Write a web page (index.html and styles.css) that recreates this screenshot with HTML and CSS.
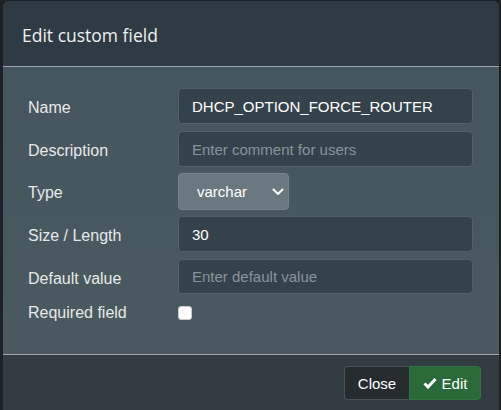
FILE: index.html
```html
<!DOCTYPE html>
<html>
<head>
<meta charset="utf-8">
<link rel="stylesheet" href="styles.css">
</head>
<body>
<div class="modal">
  <div class="modal-header">
    <h1 class="modal-title">Edit custom field</h1>
  </div>
  <div class="modal-body">
    <div class="form">
      <label class="label">Name</label>
      <div class="input">DHCP_OPTION_FORCE_ROUTER</div>
      <label class="label">Description</label>
      <div class="input placeholder">Enter comment for users</div>
      <label class="label">Type</label>
      <div class="select-wrap">
        <div class="select"><span>varchar</span>
          <svg class="chev" width="12" height="8" viewBox="0 0 12 8"><path d="M1.5 1.5 L6 6 L10.5 1.5" fill="none" stroke="#fff" stroke-width="2" stroke-linecap="round" stroke-linejoin="round"/></svg>
        </div>
      </div>
      <label class="label">Size / Length</label>
      <div class="input">30</div>
      <label class="label">Default value</label>
      <div class="input placeholder short">Enter default value</div>
      <label class="label label-check">Required field</label>
      <div class="check-wrap"><span class="checkbox"></span></div>
    </div>
  </div>
  <div class="modal-footer">
    <div class="btn-group">
      <button class="btn btn-close">Close</button>
      <button class="btn btn-edit"><svg width="14" height="12" viewBox="0 0 14 12"><path d="M1.5 6.5 L5 10 L12.5 2" fill="none" stroke="#fff" stroke-width="3" stroke-linejoin="miter"/></svg>Edit</button>
    </div>
  </div>
</div>
</body>
</html>
```
FILE: styles.css
```css
html, body {
  margin: 0;
  padding: 0;
  background: #1d2226;
  width: 501px;
  height: 410px;
  overflow: hidden;
}
.modal {
  margin: 1px 2px 0 3px;
  height: 420px;
  border-radius: 6px 6px 0 0;
  overflow: hidden;
  font-family: "Liberation Sans", Arial, sans-serif;
  background: #343c43;
  display: flex;
  flex-direction: column;
}
.modal-header {
  height: 65px;
  background: #2e3b44;
  border-bottom: 1px solid #a3a6a8;
  display: flex;
  align-items: center;
  padding-left: 19px;
}
.modal-title {
  margin: 0;
  font-family: "Open Sans", "Noto Sans", sans-serif;
  font-weight: 400;
  font-size: 17.5px;
  color: #eef0f1;
  position: relative;
  top: 1px;
}
.modal-body {
  height: 288px;
  box-sizing: border-box;
  padding: 21px 26px 0 25px;
  background: linear-gradient(180deg, #46565f 0%, #48585f 60%, #4a5a60 100%);
  border-bottom: 1px solid #a3a6a8;
}
.form {
  display: grid;
  grid-template-columns: 150px 1fr;
  grid-template-rows: 37px 36px 37px 37px 35px 20px;
  row-gap: 6px;
}
.label {
  color: #e6e9ea;
  font-size: 16px;
  display: flex;
  align-items: center;
  height: 36px;
  box-sizing: border-box;
  padding-top: 3px;
}
.label.label-check {
  height: 20px;
  padding-top: 6px;
}
.input {
  height: 36px;
  background: #34434b;
  border: 1px solid #526168;
  border-radius: 4px;
  box-sizing: border-box;
  display: flex;
  align-items: center;
  padding-left: 13px;
  color: #ffffff;
  font-size: 15px;
}
.input.short {
  height: 35px;
}
.input.placeholder {
  color: #899499;
}
.select-wrap {
  display: flex;
}
.select {
  width: 111px;
  height: 37px;
  box-sizing: border-box;
  background: #69797f;
  border: 1px solid #75848a;
  border-radius: 4px;
  display: flex;
  align-items: center;
  justify-content: space-between;
  padding: 0 4px 0 18px;
  color: #ffffff;
  font-size: 15px;
}
.chev {
  display: block;
}
.check-wrap {
  display: flex;
  align-items: center;
  height: 20px;
}
.checkbox {
  width: 14px;
  height: 14px;
  box-sizing: border-box;
  background: #fff;
  border: 1px solid #c9cdd0;
  border-radius: 3px;
  position: relative;
  top: 3px;
}
.modal-footer {
  display: flex;
  justify-content: flex-end;
  padding: 11px 18px 0 0;
  background: #343c43;
  flex: 1;
}
.btn-group {
  display: flex;
  height: 34px;
}
.btn {
  font-family: "Liberation Sans", Arial, sans-serif;
  font-size: 15px;
  color: #fff;
  border: 1px solid #4a5258;
  margin: 0;
  height: 34px;
  display: flex;
  align-items: center;
  gap: 5px;
  cursor: pointer;
}
.btn-close {
  background: #252b2f;
  border-radius: 4px 0 0 4px;
  width: 65px;
  justify-content: center;
  border-right: none;
}
.btn-edit {
  background: #2a6a39;
  border-color: #2f7440;
  border-radius: 0 4px 4px 0;
  width: 72px;
  justify-content: center;
}
```
